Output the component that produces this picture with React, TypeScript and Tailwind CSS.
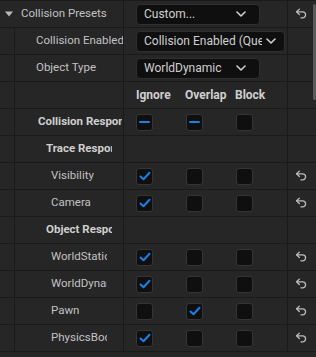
import React from 'react';

const font = { fontFamily: 'Roboto, "Noto Sans", sans-serif' };

const ResetIcon = () => (
  <svg width="13" height="12" viewBox="0 0 24 22" fill="none" stroke="#bdbdbd" strokeWidth="2.4" strokeLinecap="round" strokeLinejoin="round">
    <path d="M8 12 3 7l5-5" />
    <path d="M3 7h11a5.5 5.5 0 0 1 0 11h-3" />
  </svg>
);

const Chevron = () => (
  <svg width="10" height="6" viewBox="0 0 10 6" fill="none" stroke="#d0d0d0" strokeWidth="1.6" strokeLinecap="round" strokeLinejoin="round">
    <path d="M1 1l4 4 4-4" />
  </svg>
);

type Box = 'on' | 'off' | 'mixed';

const Check = ({ state }: { state: Box }) => (
  <div className="w-[17px] h-[17px] rounded-[3px] bg-[#0f0f0f] border border-[#353535] flex items-center justify-center">
    {state === 'on' && (
      <svg width="12" height="10" viewBox="0 0 12 10" fill="none" stroke="#1a7fe8" strokeWidth="2" strokeLinecap="round" strokeLinejoin="round">
        <path d="M1.5 5.5l3 2.8 6-6.5" />
      </svg>
    )}
    {state === 'mixed' && <div className="w-[11px] h-[2px] bg-[#1a7fe8] rounded-sm" />}
  </div>
);

const Dropdown = ({ text, wide }: { text: string; wide?: boolean }) => (
  <div className={`h-[21px] ${wide ? 'w-[149px]' : 'w-[124px]'} bg-[#0f0f0f] border border-[#2f2f2f] rounded-[4px] flex items-center pl-[7px] pr-[8px] gap-1`}>
    <span className="flex-1 overflow-hidden whitespace-nowrap text-[12px] text-[#d0d0d0]">{text}</span>
    <span className={`shrink-0 ${wide ? '' : 'mr-[5px]'}`}><Chevron /></span>
  </div>
);

interface RowProps {
  label: string;
  pad: number;
  clip: number;
  bold?: boolean;
  children?: React.ReactNode;
  reset?: boolean;
}

const Row = ({ label, pad, clip, bold, children, reset }: RowProps) => (
  <div className="flex h-[27px] border-b border-[#1a1a1a]">
    <div className="w-[15px] shrink-0 border-r border-[#1a1a1a]" />
    <div className="w-[109px] shrink-0 border-r border-[#1a1a1a] flex items-center">
      <span
        className={`block overflow-hidden whitespace-nowrap text-[11.5px] ${bold ? 'font-bold text-[#cfcfcf]' : 'text-[#c2c2c2]'}`}
        style={{ marginLeft: pad - 16, width: clip - pad }}
      >
        {label}
      </span>
    </div>
    <div className="w-[164px] shrink-0 border-r border-[#1a1a1a] flex items-center pl-[12px]">{children}</div>
    <div className="flex-1 flex items-center justify-center pr-[2px]">{reset && <ResetIcon />}</div>
  </div>
);

const Checks = ({ a, b, c }: { a: Box; b: Box; c: Box }) => (
  <div className="flex gap-[33px]">
    <Check state={a} />
    <Check state={b} />
    <Check state={c} />
  </div>
);

export default function App() {
  const channels: { name: string; s: [Box, Box, Box] }[] = [
    { name: 'WorldStatic', s: ['on', 'off', 'off'] },
    { name: 'WorldDynamic', s: ['on', 'off', 'off'] },
    { name: 'Pawn', s: ['off', 'on', 'off'] },
    { name: 'PhysicsBody', s: ['on', 'off', 'off'] },
  ];
  return (
    <div className="relative w-[316px] h-[357px] bg-[#262626] overflow-hidden" style={font}>
      <div className="border-t border-[#1a1a1a]">
        <div className="flex h-[27px] border-b border-[#1a1a1a]">
          <div className="w-[124px] shrink-0 border-r border-[#1a1a1a] flex items-center">
            <svg className="ml-[5px] mr-[8px]" width="8" height="6" viewBox="0 0 8 6">
              <path d="M0 0.5h8L4 5.5z" fill="#b8b8b8" />
            </svg>
            <span className="text-[11.5px] text-[#c2c2c2] whitespace-nowrap">Collision Presets</span>
          </div>
          <div className="w-[164px] shrink-0 border-r border-[#1a1a1a] flex items-center pl-[12px]">
            <Dropdown text="Custom..." />
          </div>
          <div className="flex-1 flex items-center justify-center pr-[2px]">
            <ResetIcon />
          </div>
        </div>
        <Row label="Collision Enabled" pad={37} clip={124}>
          <Dropdown text="Collision Enabled (Query and Physics)" wide />
        </Row>
        <Row label="Object Type" pad={37} clip={124}>
          <Dropdown text="WorldDynamic" />
        </Row>
        <Row label="" pad={37} clip={124}>
          <div className="flex text-[12px] font-bold text-[#cfcfcf]">
            <span className="w-[49px]">Ignore</span>
            <span className="w-[50px]">Overlap</span>
            <span>Block</span>
          </div>
        </Row>
        <Row label="Collision Responses" pad={39} clip={123} bold>
          <Checks a="mixed" b="mixed" c="off" />
        </Row>
        <Row label="Trace Responses" pad={47} clip={113} bold />
        <Row label="Visibility" pad={52} clip={108} reset>
          <Checks a="on" b="off" c="off" />
        </Row>
        <Row label="Camera" pad={52} clip={108} reset>
          <Checks a="on" b="off" c="off" />
        </Row>
        <Row label="Object Responses" pad={47} clip={113} bold />
        {channels.map((c) => (
          <Row key={c.name} label={c.name} pad={52} clip={108} reset>
            <Checks a={c.s[0]} b={c.s[1]} c={c.s[2]} />
          </Row>
        ))}
      </div>
      <div className="absolute right-0 top-[4px] w-[3px] h-[96px] bg-[#5a5a5a] rounded-full" />
    </div>
  );
}
